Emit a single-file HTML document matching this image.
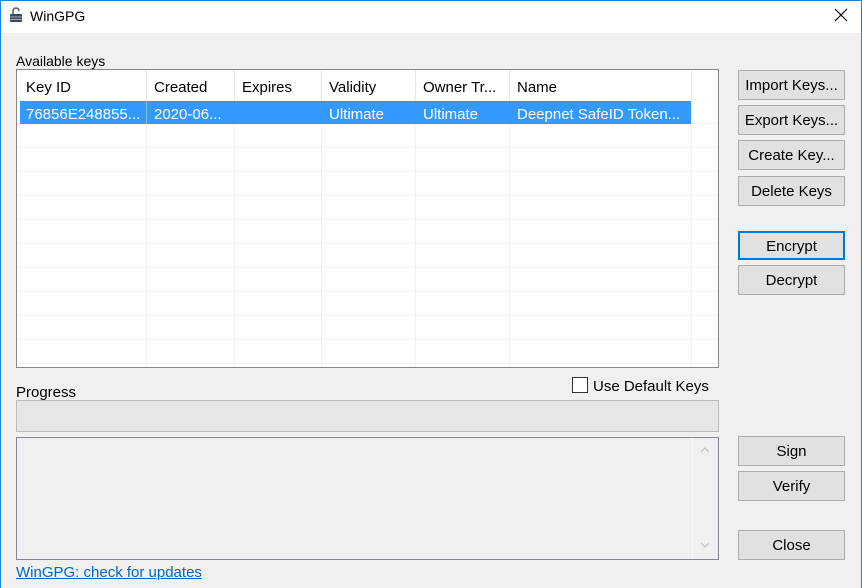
<!DOCTYPE html>
<html><head><style>
*{margin:0;padding:0;box-sizing:border-box}
body{width:862px;height:588px;overflow:hidden;background:#f0f0f0;font-family:"Liberation Sans",sans-serif;font-size:15px;color:#000;position:relative}
.a{position:absolute}
.frame{left:0;top:0;width:862px;height:588px;border:1px solid #1883d7;border-bottom:none;pointer-events:none}
.title{left:0;top:0;width:862px;height:33px;background:#fff}
.btn{position:absolute;left:738px;width:107px;background:#e1e1e1;border:1px solid #adadad;text-align:center;font-size:15px;color:#000}
.hl{background:#3399ff}
.cell{position:absolute;top:0;height:100%;white-space:nowrap;overflow:hidden}
</style></head><body>
<div class="a title"></div>
<svg class="a" style="left:9px;top:7px" width="14" height="16" viewBox="0 0 14 16">
<path d="M4 7V4a3 3 0 0 1 6 0" fill="none" stroke="#555" stroke-width="1.5"/>
<rect x="1" y="7" width="12" height="8" rx="1" fill="#3a4a5a"/>
<path d="M1 10h12M1 12.5h12" stroke="#aab" stroke-width="1"/>
</svg>
<div class="a" style="left:30px;top:8px;font-size:14px">WinGPG</div>
<svg class="a" style="left:834px;top:8px" width="14" height="14"><path d="M1 1L13 13M13 1L1 13" stroke="#000" stroke-width="1.2"/></svg>

<div class="a" style="left:16px;top:53px;font-size:14px">Available keys</div>
<div class="a" style="left:16px;top:69px;width:703px;height:299px;background:#fff;border:1px solid #828790"></div>
<div class="a" style="left:17px;top:70px;width:701px;height:297px;overflow:hidden">
 <div class="a" style="left:129px;top:0;width:1px;height:297px;background:#f0f0f0"></div>
 <div class="a" style="left:217px;top:0;width:1px;height:297px;background:#f0f0f0"></div>
 <div class="a" style="left:304px;top:0;width:1px;height:297px;background:#f0f0f0"></div>
 <div class="a" style="left:398px;top:0;width:1px;height:297px;background:#f0f0f0"></div>
 <div class="a" style="left:492px;top:0;width:1px;height:297px;background:#f0f0f0"></div>
 <div class="a" style="left:674px;top:0;width:1px;height:297px;background:#f0f0f0"></div>
 <div class="a" style="left:0;top:53px;width:701px;height:1px;background:#f0f0f0"></div>
 <div class="a" style="left:0;top:77px;width:701px;height:1px;background:#f0f0f0"></div>
 <div class="a" style="left:0;top:101px;width:701px;height:1px;background:#f0f0f0"></div>
 <div class="a" style="left:0;top:125px;width:701px;height:1px;background:#f0f0f0"></div>
 <div class="a" style="left:0;top:149px;width:701px;height:1px;background:#f0f0f0"></div>
 <div class="a" style="left:0;top:173px;width:701px;height:1px;background:#f0f0f0"></div>
 <div class="a" style="left:0;top:197px;width:701px;height:1px;background:#f0f0f0"></div>
 <div class="a" style="left:0;top:221px;width:701px;height:1px;background:#f0f0f0"></div>
 <div class="a" style="left:0;top:245px;width:701px;height:1px;background:#f0f0f0"></div>
 <div class="a" style="left:0;top:269px;width:701px;height:1px;background:#f0f0f0"></div>
 <div class="a" style="left:0;top:293px;width:701px;height:1px;background:#f0f0f0"></div>
 <div class="a" style="left:0;top:0;width:701px;height:30px;background:#fff">
  <div class="cell" style="left:9px;top:9px">Key ID</div>
  <div class="cell" style="left:137px;top:9px">Created</div>
  <div class="cell" style="left:225px;top:9px">Expires</div>
  <div class="cell" style="left:312px;top:9px">Validity</div>
  <div class="cell" style="left:406px;top:9px">Owner Tr...</div>
  <div class="cell" style="left:500px;top:9px">Name</div>
  <div class="a" style="left:129px;top:0;width:1px;height:30px;background:#e5e5e5"></div>
  <div class="a" style="left:217px;top:0;width:1px;height:30px;background:#e5e5e5"></div>
  <div class="a" style="left:304px;top:0;width:1px;height:30px;background:#e5e5e5"></div>
  <div class="a" style="left:398px;top:0;width:1px;height:30px;background:#e5e5e5"></div>
  <div class="a" style="left:492px;top:0;width:1px;height:30px;background:#e5e5e5"></div>
  <div class="a" style="left:674px;top:0;width:1px;height:30px;background:#e5e5e5"></div>
 </div>
 <div class="a hl" style="left:3px;top:31px;width:671px;height:23px;color:#fff">
  <div class="cell" style="left:6px;top:5px">76856E248855...</div>
  <div class="cell" style="left:134px;top:5px">2020-06...</div>
  <div class="cell" style="left:309px;top:5px">Ultimate</div>
  <div class="cell" style="left:403px;top:5px">Ultimate</div>
  <div class="cell" style="left:497px;top:5px">Deepnet SafeID Token...</div>
  <div class="a" style="left:126px;top:0;width:1px;height:23px;background:#fff;opacity:.4"></div>
 </div>
</div>

<div class="btn" style="top:70px;height:30px;line-height:30px">Import Keys...</div>
<div class="btn" style="top:105px;height:30px;line-height:30px">Export Keys...</div>
<div class="btn" style="top:140px;height:30px;line-height:30px">Create Key...</div>
<div class="btn" style="top:176px;height:30px;line-height:30px">Delete Keys</div>
<div class="btn" style="top:231px;height:29px;line-height:27px;border:2px solid #0078d7">Encrypt</div>
<div class="btn" style="top:265px;height:30px;line-height:30px">Decrypt</div>

<div class="a" style="left:572px;top:377px;width:16px;height:16px;background:#fff;border:1px solid #333"></div>
<div class="a" style="left:593px;top:378px">Use Default Keys</div>
<div class="a" style="left:16px;top:384px">Progress</div>
<div class="a" style="left:16px;top:400px;width:703px;height:32px;background:#e6e6e6;border:1px solid #bcbcbc"></div>
<div class="a" style="left:16px;top:437px;width:703px;height:123px;background:#f0f0f0;border:1px solid #828790"></div>
<div class="a" style="left:692px;top:438px;width:1px;height:121px;background:#fafafa"></div>
<svg class="a" style="left:700px;top:446px" width="10" height="8"><path d="M1 6L5 2L9 6" fill="none" stroke="#c0c0c0" stroke-width="1.2"/></svg>
<svg class="a" style="left:700px;top:541px" width="10" height="8"><path d="M1 2L5 6L9 2" fill="none" stroke="#c0c0c0" stroke-width="1.2"/></svg>

<div class="btn" style="top:436px;height:30px;line-height:30px">Sign</div>
<div class="btn" style="top:471px;height:30px;line-height:30px">Verify</div>
<div class="btn" style="top:530px;height:30px;line-height:30px">Close</div>

<div class="a" style="left:16px;top:564px;color:#0066cc;text-decoration:underline">WinGPG: check for updates</div>
<div class="a frame"></div>
</body></html>
